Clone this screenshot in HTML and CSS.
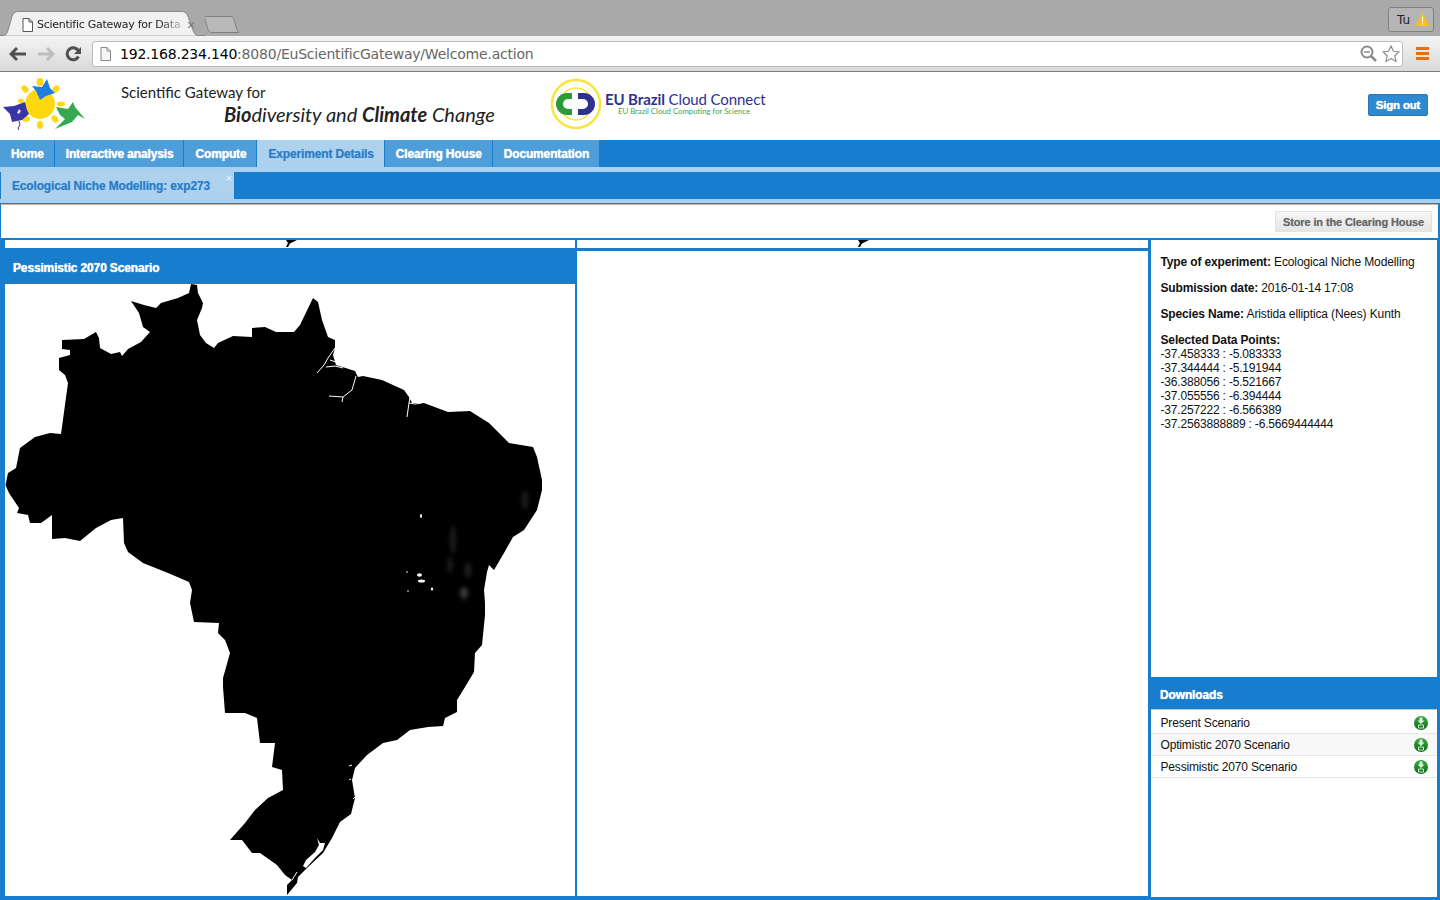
FILE: index.html
```html
<!DOCTYPE html>
<html lang="en">
<head>
<meta charset="utf-8">
<title>Scientific Gateway for Data Analysis</title>
<link rel="stylesheet" href="styles.css">
</head>
<body>
<div class="chrome">
  <div class="tabstrip">
    <div class="tab">
      <svg class="tab-shape" width="205" height="25" viewBox="0 0 205 25"><path d="M0 24.500h3c3 0 4-2 5-5l4-14c1-3 3-5 6-5h164c3 0 5 2 6 5l5 14c1 3 3 5 5 5h7" fill="#f1f1f1" stroke="#8a8a8a"/></svg>
      <svg class="doc-icon" width="11" height="14" viewBox="0 0 11 14"><path d="M1 .5h6l3.500 3.500v9.500h-9.500zM7 .5v3.500h3.500" fill="#fff" stroke="#555"/></svg>
      <span class="tab-title">Scientific Gateway for Data</span>
      <span class="tab-close">×</span>
    </div>
    <svg class="newtab" width="34" height="17" viewBox="0 0 34 17"><path d="M1 .5h24c2 0 3 1 4 3l3 10c.5 2 1 3 2 3h-27c-2 0-3-1-4-3l-3-10c-.5-2 0-3 1-3z" fill="#b9b9b9" stroke="#808080"/></svg>
    <div class="profile"><span>Tu</span>
      <svg width="15" height="13" viewBox="0 0 15 13"><path d="M7.500 0l7.500 13h-15z" fill="#f6bd27"/><path d="M7 4h1v5h-1zM7 10h1v1.500h-1z" fill="#fff"/></svg>
    </div>
  </div>
  <div class="toolbar">
    <svg class="tool" width="18" height="16" viewBox="0 0 18 16"><path d="M8 2l-6 6 6 6M3 8h14" fill="none" stroke="#505050" stroke-width="3"/></svg>
    <svg class="tool" width="18" height="16" viewBox="0 0 18 16"><path d="M10 2l6 6-6 6M15 8h-14" fill="none" stroke="#bdbdbd" stroke-width="3"/></svg>
    <svg class="tool" width="18" height="16" viewBox="0 0 18 16"><path d="M13.500 10.500a6 6 0 1 1 .2-5" fill="none" stroke="#505050" stroke-width="3"/><path d="M16 1v7h-7z" fill="#505050"/></svg>
    <div class="omnibox">
      <svg class="omni-doc" width="11" height="14" viewBox="0 0 11 14"><path d="M1 .5h6l3.500 3.500v9.500h-9.500zM7 .5v3.500h3.500" fill="#f6f6f6" stroke="#888"/></svg>
      <span class="url"><span class="url-host">192.168.234.140</span>:8080/EuScientificGateway/Welcome.action</span>
      <svg class="omni-zoom" width="17" height="17" viewBox="0 0 17 17"><circle cx="7" cy="7" r="5.500" fill="none" stroke="#8c8c8c" stroke-width="2"/><path d="M11 11l5 5" stroke="#8c8c8c" stroke-width="2.500"/><path d="M4 7h6" stroke="#8c8c8c" stroke-width="1.500"/></svg>
      <svg class="omni-star" width="18" height="18" viewBox="0 0 18 18"><path d="M9 1l2.400 5.300 5.600.6-4.200 3.800 1.200 5.700-5-2.900-5 2.900 1.200-5.700-4.200-3.800 5.600-.6z" fill="#fff" stroke="#8c8c8c" stroke-width="1.200"/></svg>
    </div>
    <div class="menu"><i></i><i></i><i></i></div>
  </div>
</div>

<header class="app-header">
  <svg class="gw-logo" width="100" height="66" viewBox="0 0 100 66">
    <g fill="#fdd80f">
      <circle cx="40" cy="32" r="15"/>
      <ellipse cx="40" cy="10" rx="3.500" ry="4"/>
      <ellipse cx="25" cy="17" rx="3" ry="4" transform="rotate(-40 25 17)"/>
      <ellipse cx="56" cy="17" rx="3" ry="4" transform="rotate(40 56 17)"/>
      <ellipse cx="61" cy="32" rx="4" ry="2.500"/>
      <ellipse cx="40" cy="53" rx="3" ry="4"/>
      <ellipse cx="55" cy="47" rx="3" ry="4" transform="rotate(-40 55 47)"/>
      <ellipse cx="26" cy="47" rx="4" ry="3"/>
      <ellipse cx="21" cy="29" rx="3" ry="2.500"/>
    </g>
    <polygon points="32,14 42,15 47,7 50,16 55,21 46,24 40,28 36,19" fill="#1f7fe0"/>
    <polygon points="3,35 14,34 25,30 27,38 29,42 22,48 12,50 10,42" fill="#3a35a5"/>
    <path d="M19 49l1 4-2 3 1 2" fill="none" stroke="#3a35a5"/>
    <polygon points="17,41 19,37 21,39 19,42" fill="#ddd"/>
    <polygon points="56,35 68,37 73,30 75,35 85,47 78,43 72,50 55,57 65,47 60,43" fill="#36a84f"/>
  </svg>
  <div class="gw-title">
    <div class="gw-line1">Scientific Gateway for</div>
    <div class="gw-line2"><b>Bio</b>diversity and <b>Climate</b> Change</div>
  </div>
  <svg class="eu-logo" width="52" height="52" viewBox="0 0 52 52">
    <circle cx="26" cy="26" r="24" fill="#fff" stroke="#f4e63a" stroke-width="2.500"/>
    <circle cx="26" cy="26" r="16" fill="none" stroke="#f4e63a" stroke-width="1.500"/>
    <path d="M22 15h-5a11 11 0 0 0 0 22h5v-6h-4a5 5 0 0 1 0-10h4z" fill="#2c9a3a"/>
    <path d="M28 15h6a11 11 0 0 1 0 22h-6v-6h5a5 5 0 0 0 0-10h-5z" fill="#2e3192"/>
  </svg>
  <div class="eu-text">
    <div class="eu-name"><b>EU Brazil</b> Cloud Connect</div>
    <div class="eu-tag">EU Brazil Cloud Computing for Science</div>
  </div>
  <a class="signout">Sign out</a>
</header>

<nav class="nav">
  <a class="nav-item">Home</a>
  <a class="nav-item">Interactive analysis</a>
  <a class="nav-item">Compute</a>
  <a class="nav-item nav-active">Experiment Details</a>
  <a class="nav-item">Clearing House</a>
  <a class="nav-item">Documentation</a>
</nav>
<div class="light-gap"></div>
<div class="subtabs">
  <div class="subtab">Ecological Niche Modelling: exp273<span class="subtab-close">×</span></div>
</div>
<div class="light-strip"></div>
<div class="actionbar"><a class="store">Store in the Clearing House</a></div>

<main class="panels">
  <section class="panel-map">
    <div class="peek"><svg width="12" height="7" viewBox="0 0 12 7"><path d="M1 0h11l-7 3.500-2 3.500h-2l2-4z" fill="#000"/></svg></div>
    <h2 class="panel-head">Pessimistic 2070 Scenario</h2>
    <svg class="map" viewBox="5 284 570 612" preserveAspectRatio="none">
      <defs><filter id="soft"><feGaussianBlur stdDeviation="2"/></filter></defs>
      <polygon fill="#000" points="191,284 197,285 198,293 203,303 202,308 197,320 200,335 206,343 214,348 218,343 233,336 252,337 252,328 265,327 276,332 294,332 300,325 313,298 318,302 322,320 328,337 335,340 335,348 333,355 336,365 355,371 358,377 363,376 382,380 404,390 409,397 412,403 424,403 448,412 470,411 489,423 509,443 533,447 537,457 542,480 542,490 537,510 524,530 513,537 504,553 494,570 489,565 487,572 484,590 485,603 485,615 482,645 475,653 474,672 465,687 457,700 457,712 445,718 443,726 428,727 410,730 397,740 383,743 367,755 355,768 352,780 355,798 351,814 340,822 332,838 323,853 308,867 298,877 297,883 287,895 287,885 292,880 285,875 277,865 260,853 252,853 242,840 230,840 245,823 255,810 268,798 283,790 282,770 272,767 275,743 260,743 257,718 245,713 225,713 223,687 223,678 230,653 225,640 218,633 219,623 194,622 190,603 192,590 189,582 168,573 143,563 128,552 124,543 123,518 111,520 96,528 80,541 65,538 52,539 52,515 41,523 30,523 28,515 17,513 19,508 9,493 5.500,485 8,473 16,468 20,448 35,437 50,433 61,434 68,383 65,375 59,370 59,358 70,355 70,350 62,349 62,340 84,339 96,332 99,338 100,348 111,354 120,352 122,356 128,349 141,342 150,332 143,327 139,313 131,301 144,305 156,308 161,303 178,298 189,293"/>
      <g fill="none" stroke="#fff" stroke-width="1">
        <path d="M335 348l-7 10-4 7-7 8M326 367l9-1 8 2M330 360l6 2"/>
        <path d="M356 376l-4 14-9 7-14-1M343 397l-1 5"/>
        <path d="M410 397l-1 6-2 14M409 403l6 1 7-1"/>
        <path d="M297 872l-5 8"/>
        <path d="M352 765l-3 1M351 779l-2 1M355 797l-2 2"/>
      </g>
      <polygon fill="#fff" points="317,838 320,843 325,843 323,850 315,858 306,868 303,866 306,860 315,852 319,845"/>
      <g fill="#fff">
        <ellipse cx="421" cy="516" rx="1" ry="2"/>
        <ellipse cx="419.500" cy="575" rx="2.500" ry="1.800"/>
        <ellipse cx="421.500" cy="581" rx="3.500" ry="1.500"/>
        <ellipse cx="432" cy="589" rx="1.200" ry="1.500"/>
        <circle cx="407" cy="572" r=".8"/>
        <circle cx="408" cy="591" r=".8"/>
      </g>
      <g fill="#555" filter="url(#soft)" opacity=".35">
        <ellipse cx="453" cy="540" rx="3" ry="14"/>
        <ellipse cx="450" cy="565" rx="2.500" ry="8"/>
        <ellipse cx="468" cy="570" rx="3.500" ry="8"/>
        <ellipse cx="464" cy="593" rx="4" ry="6" fill="#aaa"/>
        <ellipse cx="525" cy="500" rx="3" ry="10"/>
      </g>
    </svg>
  </section>
  <section class="panel-empty">
    <div class="peek"><svg width="12" height="7" viewBox="0 0 12 7"><path d="M1 0h11l-7 3.500-2 3.500h-2l2-4z" fill="#000"/></svg></div>
    <div class="panel-rule"></div>
    <div class="panel-blank"></div>
  </section>
  <aside class="panel-side">
    <div class="details">
      <p><b>Type of experiment:</b> Ecological Niche Modelling</p>
      <p><b>Submission date:</b> <span class="digits">2016-01-14 17:08</span></p>
      <p><b>Species Name:</b> Aristida elliptica (Nees) Kunth</p>
      <p><b>Selected Data Points:</b><br><span class="digits">-37.458333 : -5.083333<br>-37.344444 : -5.191944<br>-36.388056 : -5.521667<br>-37.055556 : -6.394444<br>-37.257222 : -6.566389<br>-37.2563888889 : -6.5669444444</span></p>
    </div>
    <h2 class="side-head">Downloads</h2>
    <ul class="downloads">
      <li>Present Scenario<svg class="dl" width="14" height="14" viewBox="0 0 14 14"><defs><linearGradient id="globe" x1="0" y1="0" x2="0" y2="1"><stop offset="0" stop-color="#3aa83a"/><stop offset="1" stop-color="#0f6a1c"/></linearGradient></defs><circle cx="7" cy="7" r="7" fill="url(#globe)"/><path d="M5.500 1.500h3v3h2l-3.500 3.500-3.500-3.500h2z" fill="#d8f4d8"/><path d="M4.500 9h5v3h-5z" fill="none" stroke="#c6eec8"/></svg></li>
      <li class="alt">Optimistic 2070 Scenario<svg class="dl" width="14" height="14" viewBox="0 0 14 14"><circle cx="7" cy="7" r="7" fill="url(#globe)"/><path d="M5.500 1.500h3v3h2l-3.500 3.500-3.500-3.500h2z" fill="#d8f4d8"/><path d="M4.500 9h5v3h-5z" fill="none" stroke="#c6eec8"/></svg></li>
      <li>Pessimistic 2070 Scenario<svg class="dl" width="14" height="14" viewBox="0 0 14 14"><circle cx="7" cy="7" r="7" fill="url(#globe)"/><path d="M5.500 1.500h3v3h2l-3.500 3.500-3.500-3.500h2z" fill="#d8f4d8"/><path d="M4.500 9h5v3h-5z" fill="none" stroke="#c6eec8"/></svg></li>
    </ul>
  </aside>
</main>
</body>
</html>
```
FILE: styles.css
```css
* { box-sizing: border-box; }
html, body { margin: 0; height: 900px; overflow: hidden; }
body { background: #187dcc; font: 12px/14px "Liberation Sans", Arial, sans-serif; color: #111; letter-spacing: -.11px; }
b { letter-spacing: -.15px; }
.digits { letter-spacing: -.18px; }

.chrome { height: 72px; }
.tabstrip { height: 36px; background: #a9a9a9; display: flex; align-items: flex-end; position: relative; }
.tab { position: relative; width: 206px; height: 25px; display: flex; align-items: center; padding: 2px 0 0 22px; }
.tab-shape { position: absolute; left: 0; top: 0; }
.doc-icon { position: relative; margin-right: 4px; }
.tab-title { position: relative; width: 144px; white-space: nowrap; font: 11px/14px "DejaVu Sans", sans-serif; letter-spacing: -.27px; color: #222; -webkit-mask-image: linear-gradient(90deg, #000 85%, rgba(0,0,0,.25)); mask-image: linear-gradient(90deg, #000 85%, rgba(0,0,0,.25)); }
.tab-close { position: relative; margin-left: 6px; font: 14px/14px "Liberation Sans", sans-serif; color: #777; }
.newtab { margin-left: -1px; margin-bottom: 3px; }
.profile { position: absolute; right: 6px; top: 7px; width: 46px; height: 25px; border: 1px solid #808080; border-radius: 3px; background: #b5b5b5; display: flex; align-items: center; gap: 5px; padding-left: 8px; font: 12px/14px "DejaVu Sans", sans-serif; color: #222; }
.toolbar { height: 36px; background: linear-gradient(#f4f4f4, #d9d9d9); border-bottom: 1px solid #7d7d7d; display: flex; align-items: center; padding-left: 9px; }
.tool { margin-right: 10px; flex: none; }
.omnibox { width: 1311px; height: 26px; margin-left: -1px; background: #fff; border: 1px solid #bcbcbc; border-radius: 3px; display: flex; align-items: center; padding-left: 7px; }
.omni-doc { margin-right: 9px; }
.url { flex: 1; font: 14px/16px "DejaVu Sans", sans-serif; color: #666; letter-spacing: -.21px; }
.url-host { color: #000; }
.omni-zoom { margin-right: 5px; }
.omni-star { margin-right: 2px; }
.menu { margin-left: 13px; display: flex; flex-direction: column; gap: 2px; }
.menu i { display: block; width: 13px; height: 3px; background: #e96f0c; }

.app-header { height: 68px; background: #fff; display: flex; align-items: flex-start; }
.gw-logo { flex: none; margin-right: 21px; }
.gw-title { width: 428px; padding-top: 11px; font-family: Lato, sans-serif; color: #222; letter-spacing: 0; }
.gw-line1 { font-size: 15px; line-height: 18px; }
.gw-line2 { font-size: 20px; line-height: 24px; font-style: italic; padding-left: 103px; margin-top: 1px; }
.gw-line2 b { letter-spacing: 0; }
.eu-logo { flex: none; margin-top: 6px; margin-left: 1px; }
.eu-text { margin-left: 3px; padding-top: 19px; width: 763px; color: #2e3192; font-family: Lato, sans-serif; letter-spacing: -.1px; }
.eu-text b { letter-spacing: -.1px; }
.eu-name { font-size: 15px; line-height: 16px; }
.eu-tag { font-size: 7.750px; line-height: 8px; letter-spacing: 0; color: #3aa655; padding-left: 13px; }
.signout { flex: none; margin-top: 22px; width: 60px; height: 22px; border: 1px solid #2a77b5; border-radius: 2px; background: #2e8ad0; color: #fff; font: bold 11.500px/20px "Liberation Sans", sans-serif; letter-spacing: -.2px; text-align: center; text-shadow: 0 0 1px #fff; }

.nav { height: 27px; background: #187dcc; display: flex; letter-spacing: -.15px; }
.nav-item { height: 27px; padding: 0 10px 0 11px; background: #4e9fd9; border-right: 1px solid #187dcc; color: #fff; font-weight: bold; line-height: 28px; text-shadow: 0 0 1px #fff; }
.nav-active { background: #aed2ee; color: #2b7cc7; text-shadow: 0 0 1px #6ba9dc; }
.light-gap { height: 5px; background: #a9d0ee; }
.subtabs { height: 27px; background: #187dcc; padding-left: 1px; }
.subtab { position: relative; width: 233px; height: 27px; background: #aed2ee; color: #2b7cc7; font-weight: bold; letter-spacing: -.16px; line-height: 28px; padding-left: 11px; text-shadow: 0 0 1px #6ba9dc; }
.subtab-close { position: absolute; right: 2px; top: -4px; color: #eef6fc; font-weight: normal; font-size: 11px; line-height: 20px; text-shadow: none; }
.light-strip { height: 5px; background: #a9d0ee; border-bottom: 1px solid #187dcc; }
.actionbar { height: 34px; margin: 0 2px 0 1px; background: #fff; border-top: 1px solid #bbb; display: flex; justify-content: flex-end; padding: 6px 6px 0 0; }
.store { width: 157px; height: 21px; background: linear-gradient(#f6f6f6, #e4e4e4); border: 1px solid #e2e2e2; border-bottom: 0; color: #666; font-weight: bold; font-size: 11px; letter-spacing: -.12px; line-height: 21px; text-align: center; text-shadow: 0 0 1px #aaa; }

.panels { height: 660px; padding: 2px 3px 0 5px; display: flex; }
.panel-map { width: 570px; height: 656px; background: #fff; display: flex; flex-direction: column; flex: none; }
.peek { height: 8px; background: #fff; padding-left: 280px; flex: none; line-height: 0; }
.panel-head { margin: 0; flex: none; height: 36px; background: #187dcc; color: #fff; font-size: 12px; letter-spacing: -.15px; line-height: 40px; padding-left: 8px; text-shadow: 0 0 1px #fff; }
.map { display: block; width: 570px; height: 612px; flex: none; }
.panel-empty { width: 571px; height: 656px; margin-left: 2px; display: flex; flex-direction: column; flex: none; }
.panel-rule { height: 3px; background: #187dcc; flex: none; }
.panel-blank { flex: 1; background: #fff; }
.panel-side { width: 286px; height: 657px; margin-left: 3px; display: flex; flex-direction: column; flex: none; }
.details { height: 437px; background: #fff; padding: 15px 10px 0 9.500px; flex: none; }
.details p { margin: 0 0 12px; white-space: nowrap; }
.side-head { margin: 0; height: 32px; flex: none; background: #187dcc; color: #fff; font-size: 12px; letter-spacing: -.15px; line-height: 37px; padding-left: 9px; text-shadow: 0 0 1px #fff; }
.downloads { list-style: none; margin: 0; padding: 2px 0 0; flex: 1; background: #fff; border-top: 1px solid #b9c9d6; letter-spacing: -.17px; }
.downloads li { height: 22px; padding: 0 9px 0 9.500px; border-bottom: 1px solid #e6e6e6; display: flex; align-items: center; justify-content: space-between; line-height: 22px; }
.downloads .alt { background: #f8f8f8; }
.dl { flex: none; }
```
